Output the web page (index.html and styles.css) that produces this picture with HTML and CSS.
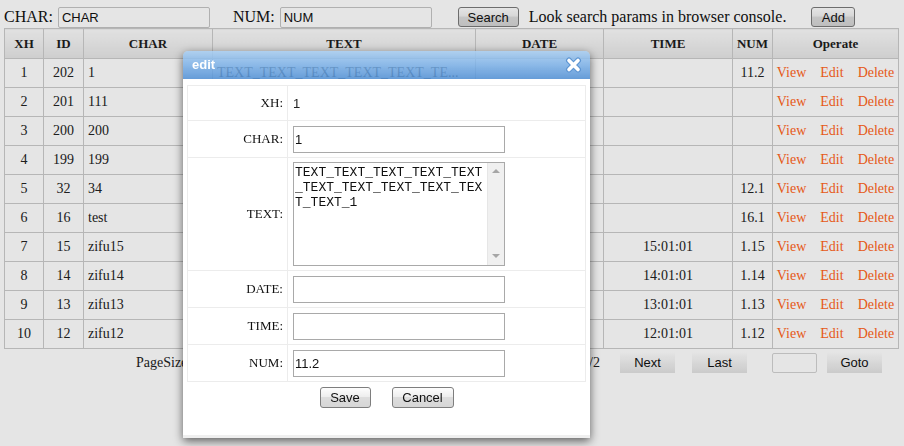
FILE: index.html
```html
<!DOCTYPE html>
<html>
<head>
<meta charset="utf-8">
<title>edit</title>
<link rel="stylesheet" href="styles.css">
</head>
<body>
<div class="page">
  <div class="toolbar">
    <span class="lbl">CHAR:</span><input class="tin" value="CHAR">
    <span class="lbl lbl-num">NUM:</span><input class="tin" value="NUM">
    <button class="btn btn-search">Search</button>
    <span class="hint">Look search params in browser console.</span>
    <button class="btn btn-add">Add</button>
  </div>
  <table class="grid">
    <colgroup>
      <col class="c-xh"><col class="c-id"><col class="c-char"><col class="c-text"><col class="c-date"><col class="c-time"><col class="c-num"><col class="c-op">
    </colgroup>
    <thead>
      <tr><th>XH</th><th>ID</th><th>CHAR</th><th>TEXT</th><th>DATE</th><th>TIME</th><th>NUM</th><th>Operate</th></tr>
    </thead>
    <tbody>
      <tr><td>1</td><td>202</td><td class="l">1</td><td class="l">TEXT_TEXT_TEXT_TEXT_TEXT_TE...</td><td></td><td></td><td>11.2</td><td><div class="ops"><a>View</a><a>Edit</a><a>Delete</a></div></td></tr>
      <tr><td>2</td><td>201</td><td class="l">111</td><td class="l"></td><td></td><td></td><td></td><td><div class="ops"><a>View</a><a>Edit</a><a>Delete</a></div></td></tr>
      <tr><td>3</td><td>200</td><td class="l">200</td><td class="l"></td><td></td><td></td><td></td><td><div class="ops"><a>View</a><a>Edit</a><a>Delete</a></div></td></tr>
      <tr><td>4</td><td>199</td><td class="l">199</td><td class="l"></td><td></td><td></td><td></td><td><div class="ops"><a>View</a><a>Edit</a><a>Delete</a></div></td></tr>
      <tr><td>5</td><td>32</td><td class="l">34</td><td class="l"></td><td></td><td></td><td>12.1</td><td><div class="ops"><a>View</a><a>Edit</a><a>Delete</a></div></td></tr>
      <tr><td>6</td><td>16</td><td class="l">test</td><td class="l"></td><td></td><td></td><td>16.1</td><td><div class="ops"><a>View</a><a>Edit</a><a>Delete</a></div></td></tr>
      <tr><td>7</td><td>15</td><td class="l">zifu15</td><td class="l"></td><td></td><td>15:01:01</td><td>1.15</td><td><div class="ops"><a>View</a><a>Edit</a><a>Delete</a></div></td></tr>
      <tr><td>8</td><td>14</td><td class="l">zifu14</td><td class="l"></td><td></td><td>14:01:01</td><td>1.14</td><td><div class="ops"><a>View</a><a>Edit</a><a>Delete</a></div></td></tr>
      <tr><td>9</td><td>13</td><td class="l">zifu13</td><td class="l"></td><td></td><td>13:01:01</td><td>1.13</td><td><div class="ops"><a>View</a><a>Edit</a><a>Delete</a></div></td></tr>
      <tr><td>10</td><td>12</td><td class="l">zifu12</td><td class="l"></td><td></td><td>12:01:01</td><td>1.12</td><td><div class="ops"><a>View</a><a>Edit</a><a>Delete</a></div></td></tr>
    </tbody>
  </table>
  <div class="pager">
    <div class="pinfo"><span>PageSize: 10</span><span>1/2</span></div>
    <button class="pbtn p-next">Next</button>
    <button class="pbtn p-last">Last</button>
    <input class="pgo">
    <button class="pbtn p-goto">Goto</button>
  </div>
</div>

<div class="mask"></div>

<div class="dialog">
  <div class="dlg-head">
    <span class="dlg-title">edit</span>
    <svg class="dlg-close" width="17" height="16" viewBox="0 0 17 16">
      <path d="M4 3.5 L13 12.5 M13 3.5 L4 12.5" stroke="#5d95d2" stroke-width="6" stroke-linecap="round" fill="none"/>
      <path d="M4 3.5 L13 12.5 M13 3.5 L4 12.5" stroke="#ffffff" stroke-width="3.6" stroke-linecap="round" fill="none"/>
    </svg>
  </div>
  <div class="dlg-body">
    <table class="form">
      <tr class="r-xh"><td class="k">XH:</td><td class="v">1</td></tr>
      <tr class="r-in"><td class="k">CHAR:</td><td class="v"><input class="finput" value="1"></td></tr>
      <tr class="r-text"><td class="k">TEXT:</td><td class="v">
        <div class="tawrap">
          <textarea class="farea">TEXT_TEXT_TEXT_TEXT_TEXT_TEXT_TEXT_TEXT_TEXT_TEXT_TEXT_1</textarea>
          <div class="vscroll"><span class="arr arr-up"></span><span class="arr arr-down"></span></div>
        </div>
      </td></tr>
      <tr class="r-in"><td class="k">DATE:</td><td class="v"><input class="finput"></td></tr>
      <tr class="r-in"><td class="k">TIME:</td><td class="v"><input class="finput"></td></tr>
      <tr class="r-in"><td class="k">NUM:</td><td class="v"><input class="finput" value="11.2"></td></tr>
    </table>
    <div class="dlg-actions">
      <button class="dbtn d-save">Save</button>
      <button class="dbtn d-cancel">Cancel</button>
    </div>
  </div>
</div>
</body>
</html>
```
FILE: styles.css
```css
html, body {
  margin: 0;
  background: #fff;
  height: 100%;
}
body {
  font-family: "Liberation Serif", "Times New Roman", serif;
  color: #222;
  overflow: hidden;
}
.page {
  padding: 0 4px;
}

/* toolbar */
.toolbar {
  display: flex;
  align-items: center;
  height: 22px;
  padding-top: 6px;
  font-size: 16px;
  white-space: nowrap;
}
.lbl {
  color: #111;
}
.lbl-num {
  margin-left: 23px;
}
.tin {
  width: 152px;
  height: 21px;
  box-sizing: border-box;
  margin: 0 0 0 5px;
  border: 1px solid #c4c4c4;
  border-radius: 2px;
  padding: 0 3px;
  font: 13px "Liberation Sans", Arial, sans-serif;
  color: #111;
  background: #fff;
  outline: none;
}
.btn {
  font: 13px "Liberation Sans", Arial, sans-serif;
  height: 20px;
  box-sizing: border-box;
  border: 1px solid #7a7a7a;
  border-radius: 3px;
  background: linear-gradient(#ffffff, #f0f0f0 45%, #dcdcdc 50%, #d4d4d4);
  padding: 0;
  color: #111;
  margin: 0;
}
.btn-search {
  margin-left: 26px;
  width: 61px;
}
.hint {
  margin-left: 10px;
  color: #111;
}
.btn-add {
  margin-left: 25px;
  width: 44px;
}

/* grid */
.grid {
  width: 894px;
  border-collapse: collapse;
  table-layout: fixed;
  font-size: 14px;
}
.c-xh { width: 39px; }
.c-id { width: 40px; }
.c-char { width: 129px; }
.c-text { width: 263px; }
.c-date { width: 128px; }
.c-time { width: 129px; }
.c-num { width: 40px; }
.c-op { width: 126px; }
.grid th,
.grid td {
  border: 1px solid #cbcbcb;
}
.grid th {
  height: 29px;
  padding: 0;
  background: linear-gradient(#fbfbfb, #e6e6e6);
  font-size: 13px;
  font-weight: bold;
  color: #1e1e1e;
}
.grid td {
  height: 28px;
  padding: 0 4px;
  text-align: center;
  white-space: nowrap;
  overflow: hidden;
  color: #222;
}
.grid td.l {
  text-align: left;
}
.ops {
  display: flex;
  justify-content: center;
  gap: 14px;
}
.ops a {
  color: #ff6420;
  cursor: pointer;
}

/* pager */
.pager {
  display: flex;
  align-items: center;
  height: 21px;
  margin-top: 3px;
  font-size: 14px;
  white-space: nowrap;
}
.pinfo {
  width: 464px;
  margin-left: 132px;
  display: flex;
  justify-content: space-between;
}
.pbtn {
  height: 21px;
  width: 55px;
  border: 0;
  padding: 0;
  background: linear-gradient(#ffffff, #e2e2e2);
  font: 13px "Liberation Sans", Arial, sans-serif;
  color: #111;
}
.p-next { margin-left: 20px; }
.p-last { margin-left: 17px; }
.pgo {
  margin-left: 25px;
  width: 45px;
  height: 20px;
  box-sizing: border-box;
  border: 1px solid #d2d2d2;
  border-radius: 2px;
  background: #fff;
}
.p-goto { margin-left: 10px; }

/* mask */
.mask {
  position: fixed;
  inset: 0;
  background: rgba(0, 0, 0, 0.1);
}

/* dialog */
.dialog {
  position: absolute;
  left: 183px;
  top: 51px;
  width: 407px;
  height: 387px;
  display: flex;
  flex-direction: column;
  border-radius: 5px 5px 0 0;
  box-shadow: 0 3px 10px rgba(0, 0, 0, 0.6);
}
.dlg-head {
  flex: none;
  height: 28px;
  display: flex;
  align-items: center;
  justify-content: space-between;
  padding: 0 8px 0 9px;
  border-radius: 5px 5px 0 0;
  background: linear-gradient(rgba(168, 207, 244, 0.84), rgba(122, 176, 232, 0.84) 50%, rgba(84, 146, 214, 0.88));
  box-sizing: border-box;
}
.dlg-title {
  color: #fff;
  font: bold 13px "Liberation Sans", Arial, sans-serif;
  margin-top: -2px;
}
.dlg-close {
  display: block;
  margin-top: -1px;
}
.dlg-body {
  flex: 1;
  background: #fff;
  padding: 6px 4px 0;
  border-bottom: 3px solid #efefef;
}
.form {
  width: 100%;
  border-collapse: collapse;
}
.form td {
  border: 1px solid #ececec;
  padding: 0;
}
.form .k {
  width: 95px;
  padding-right: 4px;
  text-align: right;
  font: 13px "Liberation Serif", "Times New Roman", serif;
  color: #111;
}
.form .v {
  padding-left: 5px;
  font: 13px "Liberation Sans", Arial, sans-serif;
  color: #222;
}
.r-xh td { height: 34px; }
.r-in td { height: 36px; }
.r-text td { height: 112px; }
.finput {
  display: block;
  width: 212px;
  height: 27px;
  box-sizing: border-box;
  margin: 0;
  border: 1px solid #a9a9a9;
  padding: 0 1px;
  font: 13px "Liberation Sans", Arial, sans-serif;
  color: #111;
  outline: none;
}
.tawrap {
  display: flex;
  width: 212px;
  height: 104px;
  box-sizing: border-box;
  border: 1px solid #a9a9a9;
  background: #fff;
}
.farea {
  flex: 1;
  min-width: 0;
  display: block;
  height: 100%;
  box-sizing: border-box;
  margin: 0;
  border: 0;
  padding: 2px 1px;
  resize: none;
  overflow: hidden;
  word-break: break-all;
  font: 13px/15px "Liberation Mono", "Courier New", monospace;
  color: #111;
  outline: none;
  background: transparent;
}
.vscroll {
  flex: none;
  width: 16px;
  background: #f0f0f0;
  border-left: 1px solid #e6e6e6;
  display: flex;
  flex-direction: column;
  justify-content: space-between;
  align-items: center;
  padding: 6px 0 7px;
}
.arr {
  width: 0;
  height: 0;
  border-left: 4px solid transparent;
  border-right: 4px solid transparent;
}
.arr-up {
  border-bottom: 4px solid #a6a6a6;
}
.arr-down {
  border-top: 4px solid #a6a6a6;
}
.dlg-actions {
  display: flex;
  justify-content: center;
  gap: 21px;
  margin-top: 5px;
}
.dbtn {
  height: 21px;
  box-sizing: border-box;
  border: 1px solid #7e7e7e;
  border-radius: 3px;
  padding: 0;
  background: linear-gradient(#fdfdfd, #eeeeee 45%, #dddddd 50%, #d6d6d6);
  font: 13px "Liberation Sans", Arial, sans-serif;
  color: #111;
}
.d-save { width: 51px; }
.d-cancel { width: 62px; }
```
